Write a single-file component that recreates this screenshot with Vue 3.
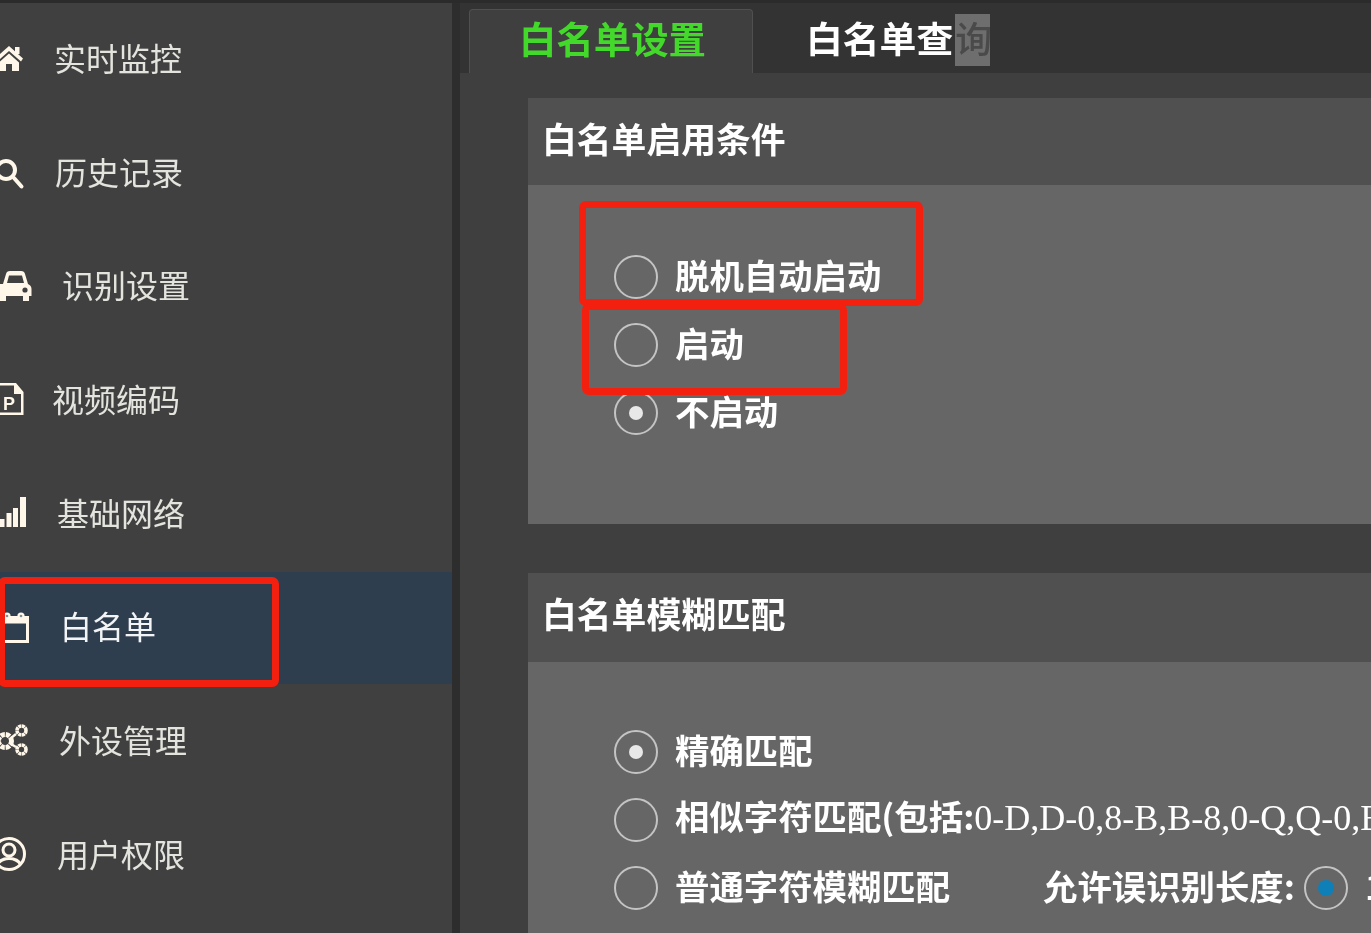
<script setup>
const navItems = [
  { key: 'home', label: '实时监控', gap: 54 },
  { key: 'search', label: '历史记录', gap: 55 },
  { key: 'car', label: '识别设置', gap: 62 },
  { key: 'file', label: '视频编码', gap: 52 },
  { key: 'signal', label: '基础网络', gap: 57 },
  { key: 'list', label: '白名单', gap: 60, active: true },
  { key: 'gears', label: '外设管理', gap: 59 },
  { key: 'user', label: '用户权限', gap: 57 }
];

const enableOptions = [
  { label: '脱机自动启动' },
  { label: '启动' },
  { label: '不启动', checked: true }
];
</script>

<template>
  <div class="page">
    <aside class="sidebar">
      <div
        v-for="item in navItems"
        :key="item.key"
        class="nav-item"
        :class="{ active: item.active }"
        :style="{ paddingLeft: item.gap + 'px' }"
      >
        <svg class="nav-icon" viewBox="0 0 32 32" fill="#fff8ea">
          <template v-if="item.key === 'home'">
            <path d="M9 4 L23 16.5 L21 19.5 L9 9 L-3 19.5 L-5 16.5 Z" />
            <path d="M15 5 H19.5 V12 H15 Z" />
            <path d="M9 11.5 L19 20.5 V29 H12 V22 H6 V29 H-1 V20.5 Z" />
          </template>
          <template v-else-if="item.key === 'search'">
            <circle cx="6" cy="14" r="9" fill="none" stroke="#fff8ea" stroke-width="4" />
            <path d="M14 22 L21.5 30.5" stroke="#fff8ea" stroke-width="4" stroke-linecap="round" />
          </template>
          <template v-else-if="item.key === 'car'">
            <path d="M3 14 L6 4 Q6.6 1 10 1 H21 Q24.4 1 25 4 L28 14 Q31.5 15.5 31.5 19 V26 H29 V31 H23 V26 H6 V31 H-1 V14 Z M7 13 H24 L22 5.5 H9 Z" fill-rule="evenodd" />
            <circle cx="25" cy="20" r="2.6" fill="#404040" />
          </template>
          <template v-else-if="item.key === 'file'">
            <path d="M-2 0 H16 L23.5 9 V32 H-2 V29.5 H21 V11 H14 V2.5 H-2 Z" />
            <text x="3" y="27" class="file-letter">P</text>
          </template>
          <template v-else-if="item.key === 'signal'">
            <rect x="0" y="22" width="4.5" height="8" />
            <rect x="6.5" y="16" width="5" height="14" />
            <rect x="13" y="11" width="5" height="19" />
            <rect x="20" y="0" width="6" height="30" />
          </template>
          <template v-else-if="item.key === 'list'">
            <path d="M2 5 H29 V32 H2 Z M4.5 12.5 V29 H26 V12.5 Z" fill-rule="evenodd" />
            <circle cx="7" cy="5" r="3.6" />
            <circle cx="21" cy="5" r="3.6" />
            <circle cx="7" cy="5" r="1.3" fill="#7e8e9c" />
            <circle cx="21" cy="5" r="1.3" fill="#7e8e9c" />
          </template>
          <template v-else-if="item.key === 'gears'">
            <circle cx="5" cy="17" r="6.5" fill="none" stroke="#fff8ea" stroke-width="5" stroke-dasharray="4.2 0.9" />
            <circle cx="21.5" cy="6.5" r="4.5" fill="none" stroke="#fff8ea" stroke-width="3.6" stroke-dasharray="3 0.5" />
            <circle cx="21.5" cy="25.5" r="4.5" fill="none" stroke="#fff8ea" stroke-width="3.6" stroke-dasharray="3 0.5" />
            <path d="M11 14 L16 10 M11 20 L16 23" stroke="#fff8ea" stroke-width="2.4" />
          </template>
          <template v-else>
            <circle cx="9" cy="16" r="15.5" fill="none" stroke="#fff8ea" stroke-width="3" />
            <circle cx="9" cy="12" r="6" fill="none" stroke="#fff8ea" stroke-width="3" />
            <path d="M-4 26 Q-1 19 9 19 Q19 19 22 26 L19.5 27.5 Q16 22 9 22 Q2 22 -1.5 27.5 Z" />
          </template>
        </svg>
        <span class="nav-label">{{ item.label }}</span>
      </div>
      <div class="mark mark-nav"></div>
    </aside>

    <div class="divider"></div>

    <main class="content">
      <div class="tabs">
        <div class="tab tab-active">白名单设置</div>
        <div class="tab tab-other">白名单查<span class="tab-hit">询</span></div>
      </div>

      <div class="panels">
        <section class="panel panel-first">
          <h2 class="panel-title">白名单启用条件</h2>
          <div class="panel-body body-enable">
            <label v-for="opt in enableOptions" :key="opt.label" class="radio-row">
              <span class="radio" :class="{ checked: opt.checked }"></span>
              <span class="opt-text">{{ opt.label }}</span>
            </label>
            <div class="mark mark-auto"></div>
            <div class="mark mark-on"></div>
          </div>
        </section>

        <section class="panel">
          <h2 class="panel-title title-tall">白名单模糊匹配</h2>
          <div class="panel-body body-match">
            <label class="radio-row">
              <span class="radio checked"></span>
              <span class="opt-text">精确匹配</span>
            </label>
            <label class="radio-row">
              <span class="radio"></span>
              <span class="opt-text">相似字符匹配(包括:<span class="latin">0-D,D-0,8-B,B-8,0-Q,Q-0,B</span></span>
            </label>
            <label class="radio-row">
              <span class="radio"></span>
              <span class="opt-text fuzzy-label">普通字符模糊匹配</span>
              <span class="opt-text allow-label">允许误识别长度:</span>
              <span class="radio blue"></span>
              <span class="opt-text">1</span>
            </label>
          </div>
        </section>
      </div>
    </main>
  </div>
</template>

<style scoped>
.page {
  display: flex;
  width: 1371px;
  height: 930px;
  margin-top: 3px;
  overflow: hidden;
  background: #3f3f3f;
  font-family: "Noto Sans CJK SC", "Liberation Sans", sans-serif;
  color: #fff;
  filter: blur(0.6px);
}

.sidebar {
  position: relative;
  flex: 0 0 452px;
  background: #404040;
}

.nav-item {
  position: relative;
  display: flex;
  align-items: center;
  box-sizing: border-box;
  height: 113.7px;
  padding-bottom: 6px;
  color: #e4e4df;
  font-size: 32px;
  line-height: 1;
}

.nav-item.active {
  border-top: 1px solid transparent;
  border-bottom: 1px solid transparent;
  background: #2f3e4f;
  background-clip: padding-box;
  color: #f2f4f6;
}

.nav-icon {
  position: absolute;
  left: 0;
  top: calc(50% - 17.5px);
  width: 32px;
  height: 32px;
  overflow: visible;
}

.file-letter {
  font-family: "Liberation Sans", sans-serif;
  font-size: 18px;
  font-weight: 700;
}

.divider {
  flex: 0 0 8px;
  background: #2d2d2d;
}

.content {
  flex: 1;
  min-width: 0;
  display: flex;
  flex-direction: column;
}

.tabs {
  display: flex;
  flex: none;
  height: 70px;
  padding-left: 9px;
  background: #333;
}

.tab {
  height: 64px;
  margin-top: 6px;
  font-size: 36.8px;
  line-height: 56px;
  font-weight: 700;
}

.tab-active {
  width: 284px;
  padding-left: 49px;
  box-sizing: border-box;
  background: #3f3f3f;
  border: 1px solid #505050;
  border-bottom: 0;
  border-radius: 4px 4px 0 0;
  font-size: 37.4px;
  color: #43d92b;
}

.tab-other {
  margin-left: 53px;
  white-space: nowrap;
}

.tab-hit {
  display: inline-block;
  width: 35px;
  height: 52px;
  margin-top: 5px;
  margin-left: 2px;
  line-height: 46px;
  vertical-align: top;
  font-weight: 500;
  background: #6e6e6e;
  color: #4a4a4a;
}

.panels {
  flex: 1;
  padding: 25px 0 0 68px;
}

.panel-first {
  margin-bottom: 49px;
}

.panel-title {
  margin: 0;
  height: 87px;
  padding-left: 14px;
  background: #505050;
  font-size: 34.8px;
  font-weight: 700;
  line-height: 80px;
}

.title-tall {
  height: 89px;
}

.panel-body {
  position: relative;
  box-sizing: border-box;
  background: #666;
}

.body-enable {
  height: 339px;
  padding-top: 58px;
}

.body-match {
  height: 300px;
  padding-top: 56px;
}

.radio-row {
  display: flex;
  align-items: center;
  height: 68px;
  padding-left: 86px;
  font-size: 34.4px;
  font-weight: 700;
  line-height: 1;
  white-space: nowrap;
}

.opt-text {
  flex: none;
  padding-bottom: 6px;
}

.latin {
  font-family: "Liberation Serif", serif;
  font-size: 36px;
  font-weight: 400;
}

.radio {
  flex: none;
  position: relative;
  width: 44px;
  height: 44px;
  margin-right: 17px;
  box-sizing: border-box;
  border: 2.5px solid #c4c4c4;
  border-radius: 50%;
}

.radio.checked::after,
.radio.blue::after {
  content: '';
  position: absolute;
  left: 50%;
  top: 50%;
  width: 14px;
  height: 14px;
  border-radius: 50%;
  background: #e8e8e8;
  transform: translate(-50%, -50%);
}

.radio.blue {
  margin-left: 9px;
}

.radio.blue::after {
  width: 16px;
  height: 16px;
  background: #0f7fb8;
}

.fuzzy-label {
  width: 368px;
}

.mark {
  position: absolute;
  box-sizing: border-box;
  border: 7px solid #f3200f;
  border-radius: 7px;
  pointer-events: none;
}

.mark-nav {
  left: -2px;
  top: 574px;
  width: 281px;
  height: 110px;
}

.mark-auto {
  left: 51px;
  top: 16px;
  width: 344px;
  height: 105px;
}

.mark-on {
  left: 54px;
  top: 118px;
  width: 265px;
  height: 92px;
}
</style>

<style>
html,
body {
  margin: 0;
  height: 933px;
  overflow: hidden;
  background: #2b2b2b;
}
</style>
